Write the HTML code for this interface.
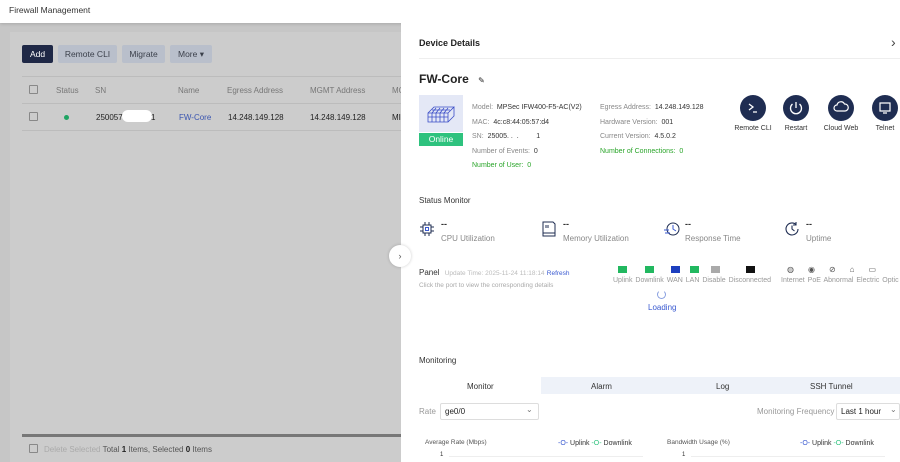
<!DOCTYPE html>
<html><head><meta charset="utf-8"><style>
*{margin:0;padding:0;box-sizing:border-box}
body{width:900px;height:462px;overflow:hidden;font-family:"Liberation Sans",sans-serif;font-size:8px;color:#333;position:relative;background:#c6c6c6}
.a{position:absolute;white-space:nowrap}
.btn{position:absolute;top:45px;height:18px;background:#b9bfcb;color:#3a3f4a;font-size:8.5px;line-height:18px;text-align:center;border-radius:2px}
.cb{position:absolute;width:9px;height:9px;border:1px solid #888;border-radius:1px;background:#ccc}
.g{color:#999}
.ic{position:absolute;width:26px;height:26px;border-radius:50%;background:#1f2d52}
.lbl{position:absolute;font-size:7px;color:#333;text-align:center}
</style></head><body>
<div class="a" style="left:0;top:0;width:900px;height:23px;background:#fff;box-shadow:0 1px 3px rgba(0,0,0,.15)"></div>
<div class="a" style="left:9px;top:5px;font-size:8.5px;color:#333">Firewall Management</div>
<div class="a" style="left:10px;top:32px;width:391px;height:430px;background:#cccccc"></div>
<div class="btn" style="left:22px;width:31px;background:#1f2846;color:#fff">Add</div>
<div class="btn" style="left:58px;width:59px">Remote CLI</div>
<div class="btn" style="left:122px;width:43px">Migrate</div>
<div class="btn" style="left:170px;width:42px">More ▾</div>
<div class="a" style="left:22px;top:76px;width:379px;height:1px;background:#bcbcbc"></div>
<div class="a" style="left:22px;top:103px;width:379px;height:1px;background:#bcbcbc"></div>
<div class="a" style="left:22px;top:130px;width:379px;height:1px;background:#bcbcbc"></div>
<div class="cb" style="left:29px;top:85px"></div>
<div class="cb" style="left:29px;top:112px"></div>
<div class="a g" style="left:56px;top:86px;color:#777">Status</div>
<div class="a" style="left:95px;top:86px;color:#777">SN</div>
<div class="a" style="left:178px;top:86px;color:#777">Name</div>
<div class="a" style="left:227px;top:86px;color:#777">Egress Address</div>
<div class="a" style="left:310px;top:86px;color:#777">MGMT Address</div>
<div class="a" style="left:392px;top:86px;color:#777">MC</div>
<div class="a" style="left:64px;top:115px;width:5px;height:5px;border-radius:50%;background:#1fa463"></div>
<div class="a" style="left:96px;top:113px;color:#222">250057</div>
<div class="a" style="left:122px;top:110px;width:30px;height:12px;border-radius:6px;background:#fff"></div>
<div class="a" style="left:151px;top:113px;color:#222">1</div>
<div class="a" style="left:179px;top:113px;color:#3a55b0">FW-Core</div>
<div class="a" style="left:228px;top:113px;color:#222">14.248.149.128</div>
<div class="a" style="left:310px;top:113px;color:#222">14.248.149.128</div>
<div class="a" style="left:392px;top:113px;color:#222">MI</div>
<div class="a" style="left:22px;top:434px;width:379px;height:3px;background:#777"></div>
<div class="cb" style="left:29px;top:444px"></div>
<div class="a" style="left:44px;top:445px;color:#aaa">Delete Selected <span style="color:#555">Total <b style="color:#222">1</b> Items, Selected <b style="color:#222">0</b> Items</span></div>

<!-- panel -->
<div class="a" style="left:401px;top:23px;width:499px;height:439px;background:#fff"></div>
<div class="a" style="left:389px;top:245px;width:22px;height:22px;border-radius:50%;background:#fff;box-shadow:0 0 3px rgba(0,0,0,.2);text-align:center;line-height:22px;font-size:9px;color:#555">›</div>
<div class="a" style="left:419px;top:38px;font-size:9px;font-weight:bold;color:#222">Device Details</div>
<div class="a" style="left:891px;top:34px;font-size:14px;color:#444">›</div>
<div class="a" style="left:419px;top:58px;width:481px;height:1px;background:#eee"></div>
<div class="a" style="left:419px;top:72px;font-size:12px;font-weight:bold;color:#222">FW-Core <span style="font-size:8px;font-weight:normal;margin-left:6px">✎</span></div>
<div class="a" style="left:419px;top:95px;width:44px;height:37px;background:#e4e8f6"></div>
<svg class="a" style="left:426px;top:105px" width="30" height="20" viewBox="0 0 30 20" fill="none" stroke="#3a4dc7" stroke-width=".8"><path d="M2 8h20v9H2zM2 8l6-6h20l-6 6M22 17l6-6V2M6 8v9M10 8v9M14 8v9M18 8v9M2 12h20M6 5h18M10 3l-4 5M14 3l-4 5M18 3l-4 5M22 3l-4 5"/></svg>
<div class="a" style="left:419px;top:133px;width:44px;height:13px;background:#2ec27e;color:#fff;font-size:8.5px;text-align:center;line-height:13px">Online</div>
<div class="a" style="left:472px;top:101px;font-size:7px;color:#888;line-height:14.5px">Model:&nbsp; <span style="color:#333">MPSec IFW400-F5-AC(V2)</span><br>MAC:&nbsp; <span style="color:#333">4c:c8:44:05:57:d4</span><br>SN:&nbsp; <span style="color:#333">25005. .&nbsp; .&nbsp;&nbsp;&nbsp;&nbsp;&nbsp;&nbsp;&nbsp;&nbsp; 1</span><br>Number of Events:&nbsp; <span style="color:#333">0</span><br><span style="color:#2aa52a">Number of User:&nbsp; 0</span></div>
<div class="a" style="left:600px;top:101px;font-size:7px;color:#888;line-height:14.5px">Egress Address:&nbsp; <span style="color:#333">14.248.149.128</span><br>Hardware Version:&nbsp; <span style="color:#333">001</span><br>Current Version:&nbsp; <span style="color:#333">4.5.0.2</span><br><span style="color:#2aa52a">Number of Connections:&nbsp; 0</span></div>
<div class="ic" style="left:740px;top:95px"><svg width="26" height="26"><path d="M9 9l4 3-4 3M13 17h4" stroke="#fff" stroke-width="1.3" fill="none"/></svg></div>
<div class="ic" style="left:783px;top:95px"><svg width="26" height="26"><path d="M9.5 9a5.5 5.5 0 1 0 7 0M13 7v6" stroke="#fff" stroke-width="1.3" fill="none"/></svg></div>
<div class="ic" style="left:828px;top:95px"><svg width="26" height="26"><path d="M9 16a3 3 0 0 1 0-6 4 4 0 0 1 7.5-1 3.5 3.5 0 0 1 .5 7z" stroke="#fff" stroke-width="1.2" fill="none"/></svg></div>
<div class="ic" style="left:872px;top:95px"><svg width="26" height="26"><path d="M8 8h10v8H8zM11 18h4" stroke="#fff" stroke-width="1.2" fill="none"/></svg></div>
<div class="lbl" style="left:727px;top:125px;width:52px">Remote CLI</div>
<div class="lbl" style="left:776px;top:125px;width:40px">Restart</div>
<div class="lbl" style="left:818px;top:125px;width:46px">Cloud Web</div>
<div class="lbl" style="left:866px;top:125px;width:38px">Telnet</div>

<div class="a" style="left:419px;top:196px;font-size:8px;color:#333">Status Monitor</div>
<svg class="a" style="left:419px;top:221px" width="16" height="16" fill="none" stroke="#1f2d52" stroke-width="1"><rect x="4" y="4" width="8" height="8"/><rect x="6.5" y="6.5" width="3" height="3" stroke="#3a5ad0"/><path d="M6 1v3M10 1v3M6 12v3M10 12v3M1 6h3M1 10h3M12 6h3M12 10h3"/></svg>
<svg class="a" style="left:541px;top:221px" width="16" height="16" fill="none" stroke="#1f2d52" stroke-width="1"><path d="M2 1h10l2 2v12H2zM5 4v3M7 4v3M2 12h12"/></svg>
<svg class="a" style="left:663px;top:221px" width="18" height="16" fill="none" stroke="#1f2d52" stroke-width="1"><circle cx="10" cy="8" r="6"/><path d="M10 4v4l3 2M1 9h5M2 12h5" stroke="#3a5ad0"/></svg>
<svg class="a" style="left:784px;top:221px" width="17" height="16" fill="none" stroke="#1f2d52" stroke-width="1.1"><path d="M14 8a6 6 0 1 1-2-4.5M12 1v3h-3M8 4.5V8l2.5 2"/></svg>
<div class="a" style="left:441px;top:219px;font-size:9px;font-weight:bold">--</div>
<div class="a" style="left:563px;top:219px;font-size:9px;font-weight:bold">--</div>
<div class="a" style="left:685px;top:219px;font-size:9px;font-weight:bold">--</div>
<div class="a" style="left:806px;top:219px;font-size:9px;font-weight:bold">--</div>
<div class="a" style="left:441px;top:234px;color:#888">CPU Utilization</div>
<div class="a" style="left:563px;top:234px;color:#888">Memory Utilization</div>
<div class="a" style="left:685px;top:234px;color:#888">Response Time</div>
<div class="a" style="left:806px;top:234px;color:#888">Uptime</div>

<div class="a" style="left:419px;top:268px;color:#333">Panel <span style="font-size:6.5px;color:#bbb;margin-left:3px">Update Time: 2025-11-24 11:18:14</span> <span style="font-size:6.5px;color:#3a5ad0">Refresh</span></div>
<div class="a" style="left:419px;top:282px;font-size:6.5px;color:#aaa">Click the port to view the corresponding details</div>
<div class="a" style="left:618px;top:266px;width:9px;height:7px;background:#22b860"></div>
<div class="a" style="left:645px;top:266px;width:9px;height:7px;background:#22b860"></div>
<div class="a" style="left:671px;top:266px;width:9px;height:7px;background:#1d3fbf"></div>
<div class="a" style="left:690px;top:266px;width:9px;height:7px;background:#22b860"></div>
<div class="a" style="left:711px;top:266px;width:9px;height:7px;background:#aaa"></div>
<div class="a" style="left:746px;top:266px;width:9px;height:7px;background:#111"></div>
<div class="a" style="left:613px;top:277px;font-size:7px;color:#999;word-spacing:1px">Uplink Downlink WAN LAN Disable Disconnected</div>
<div class="a" style="left:787px;top:265px;font-size:8px;color:#555;letter-spacing:14px">◍◉⊘⌂▭</div>
<div class="a" style="left:781px;top:277px;font-size:7px;color:#999;word-spacing:1px">Internet PoE Abnormal Electric Optic</div>
<div class="a" style="left:657px;top:290px;width:9px;height:9px;border:1.2px solid #8aa0e0;border-radius:50%;border-top-color:transparent"></div>
<div class="a" style="left:648px;top:303px;color:#3a5ad0">Loading</div>

<div class="a" style="left:419px;top:356px;color:#333">Monitoring</div>
<div class="a" style="left:419px;top:377px;width:481px;height:17px;background:#eef2f9"></div>
<div class="a" style="left:419px;top:377px;width:122px;height:17px;background:#fff"></div>
<div class="a" style="left:467px;top:382px">Monitor</div>
<div class="a" style="left:591px;top:382px">Alarm</div>
<div class="a" style="left:716px;top:382px">Log</div>
<div class="a" style="left:810px;top:382px">SSH Tunnel</div>
<div class="a" style="left:419px;top:407px;color:#999">Rate</div>
<div class="a" style="left:440px;top:403px;width:99px;height:17px;border:1px solid #ddd;border-radius:2px"></div>
<div class="a" style="left:445px;top:407px;color:#222">ge0/0</div>
<div class="a" style="left:526px;top:405px;color:#777">⌄</div>
<div class="a" style="left:757px;top:407px;color:#999">Monitoring Frequency</div>
<div class="a" style="left:836px;top:403px;width:64px;height:17px;border:1px solid #ddd;border-radius:2px"></div>
<div class="a" style="left:841px;top:407px;color:#222">Last 1 hour</div>
<div class="a" style="left:890px;top:405px;color:#777">⌄</div>
<div class="a" style="left:425px;top:439px;font-size:6.5px;color:#555">Average Rate (Mbps)</div>
<div class="a" style="left:667px;top:439px;font-size:6.5px;color:#555">Bandwidth Usage (%)</div>
<div class="a" style="left:558px;top:440px;font-size:7px;color:#333"><span style="color:#3a5ad0">-O-</span> Uplink <span style="color:#2ec27e">-O-</span> Downlink</div>
<div class="a" style="left:800px;top:440px;font-size:7px;color:#333"><span style="color:#3a5ad0">-O-</span> Uplink <span style="color:#2ec27e">-O-</span> Downlink</div>
<div class="a" style="left:440px;top:452px;font-size:6px">1</div>
<div class="a" style="left:682px;top:452px;font-size:6px">1</div>
<div class="a" style="left:449px;top:456px;width:194px;height:1px;background:#eee"></div>
<div class="a" style="left:691px;top:456px;width:194px;height:1px;background:#eee"></div>
</body></html>
